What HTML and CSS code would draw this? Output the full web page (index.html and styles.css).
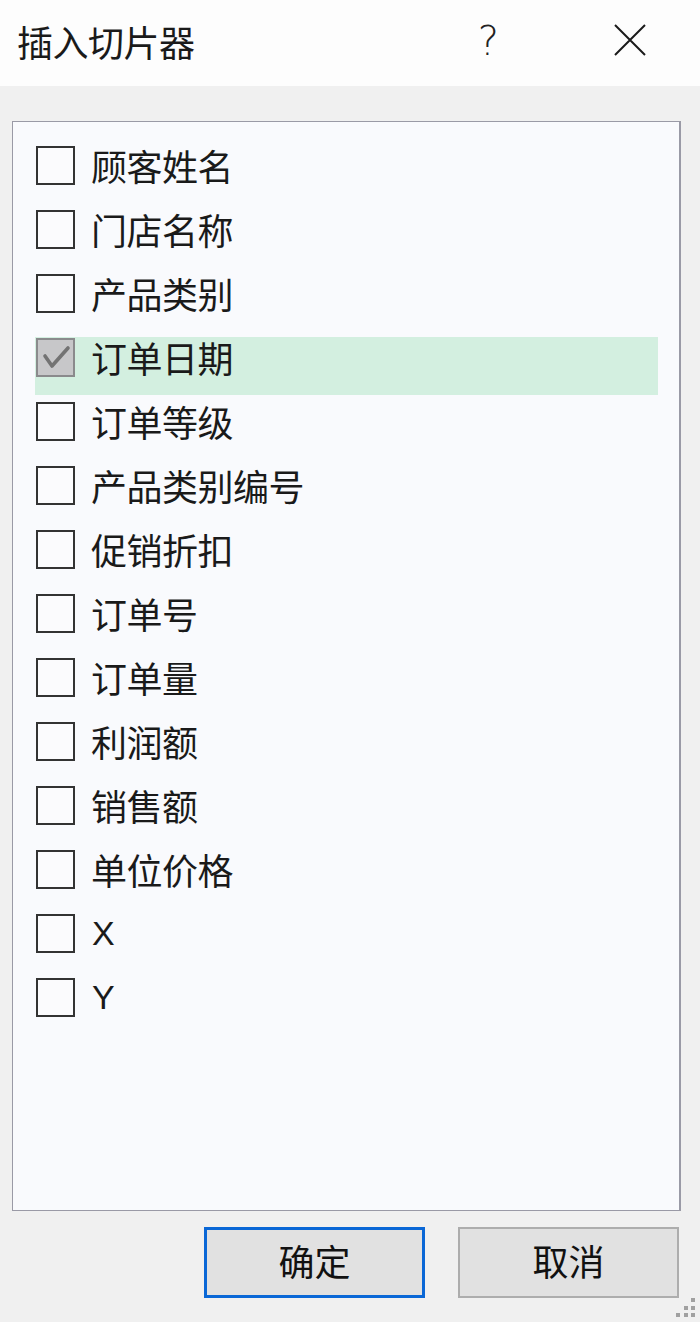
FILE: index.html
```html
<!DOCTYPE html>
<html lang="zh-CN">
<head>
<meta charset="utf-8">
<title>插入切片器</title>
<link rel="stylesheet" href="styles.css">
</head>
<body>
<div class="dialog">
  <header class="titlebar">
    <span class="title">插入切片器</span>
    <span class="help">?</span>
    <span class="close">
      <svg width="32" height="32" viewBox="0 0 32 32"><path d="M1 1 L31 31 M31 1 L1 31" stroke="#1a1a1a" stroke-width="2" fill="none"/></svg>
    </span>
  </header>
  <main class="content">
    <div class="list">
      <div class="item"><span class="box"></span><span class="label">顾客姓名</span></div>
      <div class="item"><span class="box"></span><span class="label">门店名称</span></div>
      <div class="item"><span class="box"></span><span class="label">产品类别</span></div>
      <div class="item selected"><span class="box checked"><svg width="35" height="35" viewBox="0 0 35 35"><path d="M7 16 L14 26 L30 8" stroke="#737373" stroke-width="3.6" fill="none" stroke-linecap="round" stroke-linejoin="round"/></svg></span><span class="label">订单日期</span></div>
      <div class="item"><span class="box"></span><span class="label">订单等级</span></div>
      <div class="item"><span class="box"></span><span class="label">产品类别编号</span></div>
      <div class="item"><span class="box"></span><span class="label">促销折扣</span></div>
      <div class="item"><span class="box"></span><span class="label">订单号</span></div>
      <div class="item"><span class="box"></span><span class="label">订单量</span></div>
      <div class="item"><span class="box"></span><span class="label">利润额</span></div>
      <div class="item"><span class="box"></span><span class="label">销售额</span></div>
      <div class="item"><span class="box"></span><span class="label">单位价格</span></div>
      <div class="item"><span class="box"></span><span class="label latin">X</span></div>
      <div class="item"><span class="box"></span><span class="label latin">Y</span></div>
    </div>
    <div class="buttons">
      <button class="btn primary">确定</button>
      <button class="btn">取消</button>
    </div>
  </main>
  <div class="grip">
    <i class="d1"></i><i class="d2"></i><i class="d3"></i><i class="d4"></i><i class="d5"></i><i class="d6"></i>
  </div>
</div>
</body>
</html>
```

FILE: styles.css
```css
* { box-sizing: border-box; }
html, body { margin: 0; padding: 0; }
body {
  width: 700px;
  height: 1322px;
  background: #f0f0f0;
  font-family: "Noto Sans CJK SC", "Noto Sans", sans-serif;
  color: #1a1a1a;
  overflow: hidden;
}
.dialog {
  position: relative;
  width: 700px;
  height: 1322px;
  display: flex;
  flex-direction: column;
}
.titlebar {
  height: 86px;
  background: #fdfdfd;
  display: flex;
  align-items: center;
  padding-left: 17px;
  flex-shrink: 0;
}
.title {
  font-size: 36px;
  line-height: 40px;
  letter-spacing: -0.5px;
  flex: 1;
  margin-top: -4px;
}
.help {
  font-family: "DejaVu Sans", sans-serif;
  font-weight: 300;
  font-size: 40px;
  line-height: 44px;
  color: #222;
  margin-right: 115px;
  margin-top: -4px;
}
.close {
  width: 32px;
  height: 32px;
  margin-right: 54px;
  margin-top: -6px;
  display: flex;
}
.content {
  flex: 1;
  display: flex;
  flex-direction: column;
  padding: 35px 19px 25px 12px;
}
.list {
  height: 1090px;
  background: #f9fafd;
  border: 1px solid #9a9aa6;
  border-right-width: 2px;
  padding: 23px 21px 0 22px;
  display: flex;
  flex-direction: column;
}
.item {
  height: 58px;
  margin-bottom: 6px;
  display: flex;
  align-items: flex-start;
  flex-shrink: 0;
}
.item.selected {
  background: #d3efe0;
}
.box {
  width: 39px;
  height: 39px;
  margin: 1px 0 0 1px;
  border: 2px solid #333;
  background: #fbfbfd;
  flex-shrink: 0;
  display: flex;
  align-items: center;
  justify-content: center;
}
.box.checked {
  background: #c7c7c9;
  border-color: #8a8a8c;
}
.label {
  margin-left: 16px;
  margin-top: 1px;
  font-size: 36px;
  line-height: 39px;
  letter-spacing: -0.5px;
}
.label.latin {
  font-family: "Liberation Sans", sans-serif;
  font-size: 34px;
  margin-left: 17px;
}
.buttons {
  display: flex;
  justify-content: flex-end;
  gap: 33px;
  margin-top: 16px;
  padding-right: 2px;
}
.btn {
  width: 221px;
  height: 71px;
  background: #e1e1e1;
  border: 2px solid #adadad;
  font-family: "Noto Sans CJK SC", "Noto Sans", sans-serif;
  font-size: 36px;
  color: #111;
  padding: 0 0 5px 0;
  line-height: 40px;
}
.btn.primary {
  border: 3px solid #0a67d6;
}
.grip i {
  position: absolute;
  width: 4px;
  height: 4px;
  background: #a0a0a0;
}
.grip .d1 { left: 691px; top: 1298px; }
.grip .d2 { left: 684px; top: 1306px; }
.grip .d3 { left: 691px; top: 1306px; }
.grip .d4 { left: 676px; top: 1313px; }
.grip .d5 { left: 684px; top: 1313px; }
.grip .d6 { left: 691px; top: 1313px; }
```
